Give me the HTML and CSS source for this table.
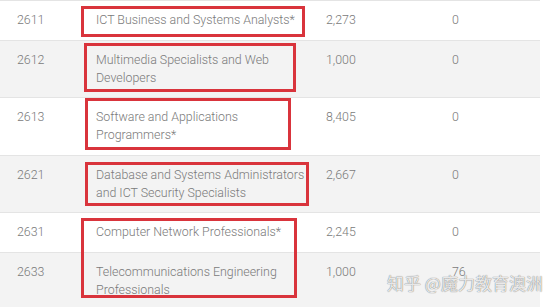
FILE: index.html
```html
<!DOCTYPE html>
<html>
<head>
<meta charset="utf-8">
<link rel="stylesheet" href="styles.css">
</head>
<body>
<div class="wrap">
  <table class="occ">
    <colgroup>
      <col class="c1"><col class="c2"><col class="c3"><col class="c4">
    </colgroup>
    <tbody>
      <tr><td>2611</td><td>ICT Business and Systems Analysts*</td><td>2,273</td><td>0</td></tr>
      <tr class="alt"><td>2612</td><td>Multimedia Specialists and Web Developers</td><td>1,000</td><td>0</td></tr>
      <tr><td>2613</td><td>Software and Applications Programmers*</td><td>8,405</td><td>0</td></tr>
      <tr class="alt"><td>2621</td><td>Database and Systems Administrators and ICT Security Specialists</td><td>2,667</td><td>0</td></tr>
      <tr><td>2631</td><td>Computer Network Professionals*</td><td>2,245</td><td>0</td></tr>
      <tr class="alt"><td>2633</td><td>Telecommunications Engineering Professionals</td><td>1,000</td><td>76</td></tr>
    </tbody>
  </table>
  <div class="mark m1"></div>
  <div class="mark m2"></div>
  <div class="mark m3"></div>
  <div class="mark m4"></div>
  <div class="mark m5"></div>
  <div class="watermark">知乎 @魔力教育澳洲</div>
</div>
</body>
</html>
```

FILE: styles.css
```css
html, body {
  margin: 0;
  padding: 0;
  background: #fff;
}
.wrap {
  position: relative;
  width: 554px;
  height: 307px;
  overflow: hidden;
}
.occ {
  width: 540px;
  border-collapse: collapse;
  table-layout: fixed;
  font-family: Roboto, "Liberation Sans", sans-serif;
  font-size: 12.4px;
  font-weight: 300;
  color: #7a7a7a;
  border-top: 1px solid #e4e4e4;
}
.c1 { width: 79px; }
.c2 { width: 230px; }
.c3 { width: 126px; }
.c4 { width: 105px; }
.occ td {
  padding: 10px 1px 10.5px 17px;
  line-height: 18px;
  vertical-align: top;
  border-bottom: 1px solid #e4e4e4;
}
.occ tr.alt td {
  background: #f3f3f3;
}
.mark {
  position: absolute;
  border: 3px solid #d9343c;
  box-sizing: border-box;
}
.m1 { left: 81px; top: 6px; width: 224px; height: 31px; }
.m2 { left: 84px; top: 43px; width: 212px; height: 49px; }
.m3 { left: 85px; top: 98px; width: 206px; height: 52px; }
.m4 { left: 85px; top: 162px; width: 224px; height: 44px; }
.m5 { left: 81px; top: 218px; width: 216px; height: 80px; }
.watermark {
  position: absolute;
  left: 387px;
  top: 271px;
  font-family: "Noto Sans CJK SC", sans-serif;
  font-size: 17px;
  line-height: 24px;
  color: rgba(255,255,255,0.85);
  text-shadow: 0 0 1px rgba(0,0,0,0.45), 0 0 1px rgba(0,0,0,0.3);
  white-space: nowrap;
}
```
